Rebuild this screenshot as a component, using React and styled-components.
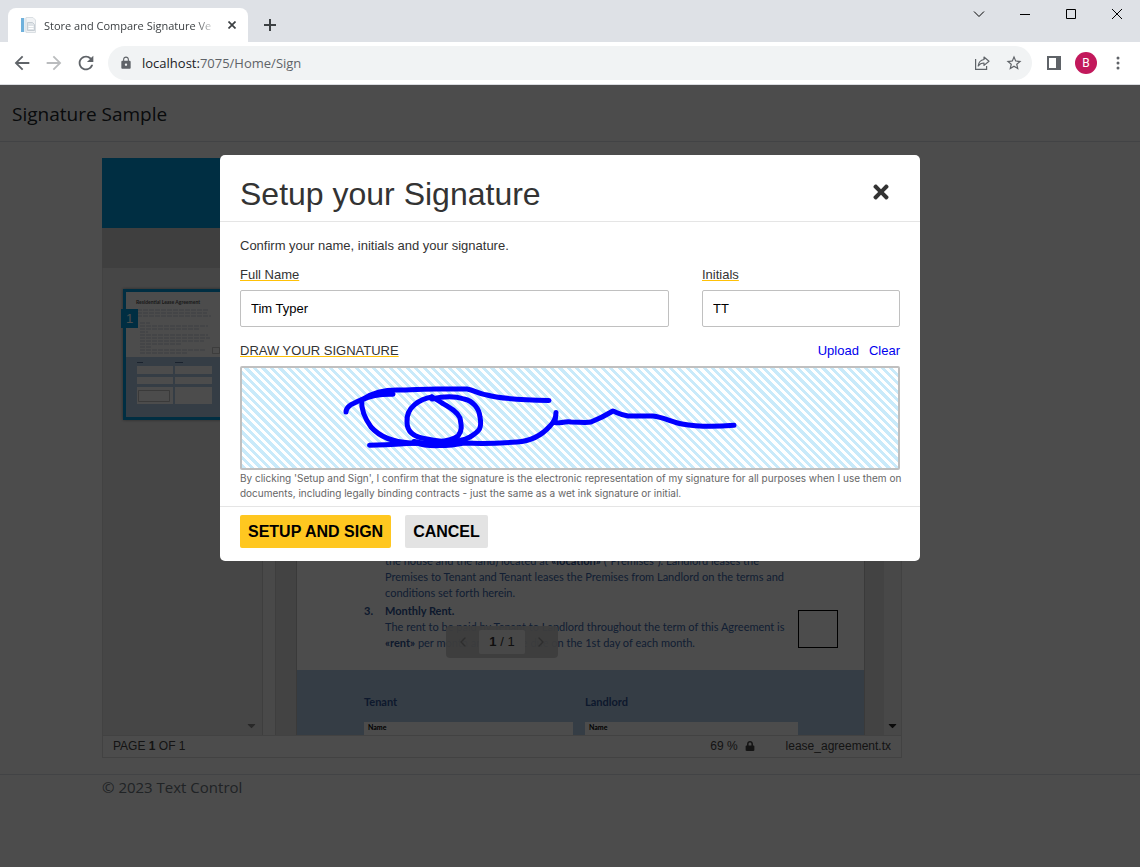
import React, { useState } from 'react'
import styled, { createGlobalStyle } from 'styled-components'
import { MdArrowBack, MdArrowForward, MdRefresh, MdLock, MdStarBorder } from 'react-icons/md'
import { FaTimes, FaCaretDown, FaLock } from 'react-icons/fa'
import { ChevronLeft, ChevronRight } from 'lucide-react'

export default function App() {
    const [fullName, setFullName] = useState('Tim Typer')
    const [initials, setInitials] = useState('TT')

    return (
        <Window>
            <GlobalStyle />
            <TitleBar>
                <Tab>
                    <Favicon />
                    <TabTitle>Store and Compare Signature Ve</TabTitle>
                    <IconButton $size={16} aria-label="Close tab"><CrossIcon /></IconButton>
                </Tab>
                <IconButton $size={28} aria-label="New tab"><PlusIcon /></IconButton>
                <WindowControls>
                    <WindowButton aria-label="Search tabs">
                        <svg width="12" height="12" viewBox="0 0 12 12"><path d="M1 3.5l5 5 5-5" /></svg>
                    </WindowButton>
                    <WindowButton aria-label="Minimize">
                        <svg width="10" height="10" viewBox="0 0 10 10"><path d="M0 5.5h10" /></svg>
                    </WindowButton>
                    <WindowButton aria-label="Maximize">
                        <svg width="10" height="10" viewBox="0 0 10 10"><path d="M.5 .5h9v9h-9z" /></svg>
                    </WindowButton>
                    <WindowButton aria-label="Close">
                        <svg width="10" height="10" viewBox="0 0 10 10"><path d="M0 0l10 10M10 0L0 10" /></svg>
                    </WindowButton>
                </WindowControls>
            </TitleBar>

            <Toolbar>
                <IconButton $size={32} aria-label="Back"><MdArrowBack size={22} /></IconButton>
                <IconButton $size={32} $muted aria-label="Forward"><MdArrowForward size={22} /></IconButton>
                <IconButton $size={32} aria-label="Reload"><MdRefresh size={22} /></IconButton>
                <AddressBar>
                    <MdLock size={14} />
                    <Url><b>localhost:</b>7075/Home/Sign</Url>
                    <IconButton $size={32} aria-label="Share"><ShareIcon /></IconButton>
                    <IconButton $size={32} aria-label="Bookmark"><MdStarBorder size={18} /></IconButton>
                </AddressBar>
                <IconButton $size={32} aria-label="Side panel"><PanelIcon /></IconButton>
                <IconButton $size={32} aria-label="Profile"><Avatar>B</Avatar></IconButton>
                <IconButton $size={32} aria-label="Menu"><DotsIcon /></IconButton>
            </Toolbar>

            <Page>
                <Navbar><Brand href="#">Signature Sample</Brand></Navbar>

                <Container>
                    <Viewer>
                        <ViewerHeader />
                        <ViewerTools />
                        <ViewerBody>
                            <Sidebar>
                                <Thumbnail>
                                    <ThumbnailPage />
                                    <ThumbnailBadge>1</ThumbnailBadge>
                                </Thumbnail>
                                <ScrollDown><FaCaretDown size={13} /></ScrollDown>
                            </Sidebar>
                            <Splitter />
                            <Canvas>
                                <Sheet>
                                    <Terms>
                                        <Clauses>
                                            <p>
                                                the house and the land) located at <b>«location»</b> (“Premises”). Landlord leases the<br />
                                                Premises to Tenant and Tenant leases the Premises from Landlord on the terms and<br />
                                                conditions set forth herein.
                                            </p>
                                            <ClauseTitle><span>3.</span>Monthly Rent.</ClauseTitle>
                                            <p>
                                                The rent to be paid by Tenant to Landlord throughout the term of this Agreement is<br />
                                                <b>«rent»</b> per month and shall be due on the 1st day of each month.
                                            </p>
                                        </Clauses>
                                        <InitialsBox />
                                    </Terms>
                                    <Parties>
                                        <Party>
                                            <h3>Tenant</h3>
                                            <PartyField>Name</PartyField>
                                        </Party>
                                        <Party>
                                            <h3>Landlord</h3>
                                            <PartyField>Name</PartyField>
                                        </Party>
                                    </Parties>
                                </Sheet>
                                <Pager>
                                    <ChevronLeft size={16} />
                                    <PagerValue><b>1</b> / 1</PagerValue>
                                    <ChevronRight size={16} />
                                </Pager>
                            </Canvas>
                            <Scrollbar><FaCaretDown size={13} /></Scrollbar>
                        </ViewerBody>
                        <StatusBar>
                            <PageCount>PAGE <b>1</b> OF 1</PageCount>
                            <span>69 %</span>
                            <FaLock size={10} />
                            <FileName>lease_agreement.tx</FileName>
                        </StatusBar>
                    </Viewer>
                </Container>

                <PageFooter>
                    <FooterText>© 2023 Text Control</FooterText>
                </PageFooter>

                <Backdrop>
                    <Modal role="dialog" aria-labelledby="modal-title">
                        <ModalHeader>
                            <ModalTitle id="modal-title">Setup your Signature</ModalTitle>
                            <CloseButton aria-label="Close dialog"><FaTimes size={22} /></CloseButton>
                        </ModalHeader>
                        <ModalBody>
                            <p>Confirm your name, initials and your signature.</p>
                            <Fields>
                                <Field>
                                    <label htmlFor="fullName"><Underlined>Full Name</Underlined></label>
                                    <TextInput id="fullName" value={fullName} onChange={e => setFullName(e.target.value)} />
                                </Field>
                                <Field>
                                    <label htmlFor="initials"><Underlined>Initials</Underlined></label>
                                    <TextInput id="initials" value={initials} onChange={e => setInitials(e.target.value)} />
                                </Field>
                            </Fields>
                            <PadHeader>
                                <Underlined>DRAW YOUR SIGNATURE</Underlined>
                                <PadLinks>
                                    <a href="#upload">Upload</a>
                                    <a href="#clear">Clear</a>
                                </PadLinks>
                            </PadHeader>
                            <Pad><SignatureDrawing /></Pad>
                            <Legal>
                                By clicking 'Setup and Sign', I confirm that the signature is the electronic representation of my signature for all purposes when I use them on<br />
                                documents, including legally binding contracts - just the same as a wet ink signature or initial.
                            </Legal>
                        </ModalBody>
                        <ModalFooter>
                            <ActionButton $primary>SETUP AND SIGN</ActionButton>
                            <ActionButton>CANCEL</ActionButton>
                        </ModalFooter>
                    </Modal>
                </Backdrop>
            </Page>
        </Window>
    )
}


/** DRAWINGS */

const Favicon = () => (
    <svg width="16" height="16" viewBox="0 0 16 16">
        <path d="M1 1h3v14H1z" fill="#6fb1dc" />
        <path d="M4 1h2v14H4z" fill="#e3edf4" />
        <path d="M6 .5h7l2.5 2.5v12.5H6z" fill="#f1f3f5" stroke="#dadfe3" />
        <path d="M7.5 5.5h5l2 2v6h-7z" fill="#dfe4e8" stroke="#c6cdd3" />
        <path d="M8.5 9.5h5M8.5 11.5h5" stroke="#fff" />
    </svg>
)

const CrossIcon = () => (
    <svg width="8" height="8" viewBox="0 0 8 8" stroke="#3c4043" strokeWidth="1.7"><path d="M.5 .5l7 7M7.5 .5l-7 7" /></svg>
)

const PlusIcon = () => (
    <svg width="12" height="12" viewBox="0 0 12 12" stroke="#3c4043" strokeWidth="2"><path d="M6 0v12M0 6h12" /></svg>
)

const ShareIcon = () => (
    <svg width="16" height="16" viewBox="0 0 16 16" fill="none" stroke="#5f6368" strokeWidth="1.2">
        <path d="M1.6 4v10.4h11V11" />
        <path d="M10 2l5 4.2-5 4.2V8C7.4 8 5.6 8.9 4.2 11 4.6 7.4 6.6 5 10 4.5z" strokeLinejoin="round" />
    </svg>
)

const PanelIcon = () => (
    <svg width="14" height="14" viewBox="0 0 14 14"><path fillRule="evenodd" d="M0 0h14v14H0zM2 2v10h7V2z" fill="#5f6368" /></svg>
)

const DotsIcon = () => (
    <svg width="4" height="14" viewBox="0 0 4 14" fill="#5f6368">
        <circle cx="2" cy="2" r="1.5" /><circle cx="2" cy="7" r="1.5" /><circle cx="2" cy="12" r="1.5" />
    </svg>
)

const textLines = [
    [14, 18, 72], [14, 21, 70], [14, 24, 74], [17, 31, 10], [17, 34, 68], [17, 37, 60],
    [17, 40, 8], [17, 43, 68], [17, 46, 70], [17, 49, 64], [17, 52, 42], [17, 55, 12], [17, 58, 66], [17, 61, 48],
]

const ThumbnailPage = () => (
    <svg width="96" height="125" viewBox="0 0 96 125">
        <path d="M0 0h96v125H0z" fill="#fff" />
        <text x="10" y="12" fontFamily="Lato, sans-serif" fontSize="5" fontWeight="700" fill="#555">Residential Lease Agreement</text>
        {textLines.map(([x, y, w]) => (
            <path key={y} d={`M${x - 3} ${y}h${w}`} stroke="#54709c" strokeWidth="1.6" strokeDasharray="5 1" opacity=".22" />
        ))}
        <path d="M86.5 55.5h7v6h-7z" fill="none" stroke="#999" strokeWidth=".5" />
        <path d="M0 65h96v60H0z" fill="#b3cce6" />
        <path d="M11 70.5h6M49 70.5h8" stroke="#1f3864" opacity=".6" />
        <path d="M11 74h36v8H11zM49 74h37v8H49zM11 85h36v7H11zM49 85h37v7H49zM11 95h36v17H11zM49 95h37v17H49z" fill="#fff" />
        <path d="M12.5 98.5h31v11h-31z" fill="none" stroke="#888" strokeWidth=".5" />
    </svg>
)

const SignatureDrawing = () => (
    <svg width="656" height="100" viewBox="0 0 656 100" fill="none" stroke="#0000ff" strokeWidth="5" strokeLinecap="round" strokeLinejoin="round">
        <path d="M104 44C104 39 107 37 121 31C132 24 142 22 155 22C168 22 182 21 195 21H225C232 22 237 26 245 27C255 30 285 32 307 32.5" />
        <path d="M151 26.3C140 26 128 28 119.7 32C119 42 124 52 129 59C137 68 151 74 168 75C184 76 209 74 216 68C221 62 219 56 218 50C215 43 207 39 200 35C196 32 193 31 190 29" />
        <path d="M190 29C178 31 164 39 165 54C165 67 177 70 185 71C200 74 215 76 228 69C238 63 240 60 238 49C237 40 231 33 222 31C210 27 198 29 190 31" />
        <path d="M127.5 77.3C145 77 158 76 175 75C184 79 208 78 222 75C240 76 262 75 275 74C290 73 300 67 308 58C313 53 314 49 314 44.5L313 54.5C317 56 322 53 329 54C337 54 344 55 349 54C359 50 366 46 371 43C376 45 379 47 386 48H411C421 49 430 54 440 56C456 59 472 59 492 57.3" />
        <path d="M172 73.5C185 77 203 77 214 71" />
    </svg>
)


/** STYLED COMPONENTS */

const GlobalStyle = createGlobalStyle`
    * {
        box-sizing: border-box;
    }
    body {
        margin: 0;
        font-family: 'Open Sans', sans-serif;
    }
    button {
        font-family: inherit;
        border: 0;
        padding: 0;
        cursor: pointer;
    }
    p, h1, h3 {
        margin: 0;
    }
`;

const Window = styled.div`
    display: flex;
    flex-direction: column;
    min-height: 100vh;
`;

const TitleBar = styled.div`
    display: flex;
    align-items: flex-end;
    height: 42px;
    padding-left: 8px;
    background-color: #dee1e6;
`;

const Tab = styled.div`
    display: flex;
    align-items: center;
    gap: 8px;
    width: 240px;
    height: 34px;
    padding: 0 8px 0 12px;
    margin-right: 8px;
    border-radius: 8px 8px 0 0;
    background-color: #fff;
`;

const TabTitle = styled.span`
    flex: 1;
    overflow: hidden;
    white-space: nowrap;
    font-size: 11px;
    color: #3c4043;
    mask-image: linear-gradient(90deg, #000 88%, transparent);
`;

const IconButton = styled.button`
    display: flex;
    align-items: center;
    justify-content: center;
    flex: none;
    width: ${props => props.$size}px;
    height: ${props => props.$size}px;
    background: none;
    color: ${props => props.$muted ? '#babcbe' : '#5f6368'};

    ${TitleBar} > & {
        margin-bottom: 3px;
    }
`;

const WindowControls = styled.div`
    display: flex;
    align-self: flex-start;
    margin-left: auto;
`;

const WindowButton = styled.button`
    display: flex;
    align-items: center;
    justify-content: center;
    width: 46px;
    height: 28px;
    background: none;

    svg {
        fill: none;
        stroke: #000;
    }
`;

const Toolbar = styled.div`
    display: flex;
    align-items: center;
    padding: 4px 6px;
    background-color: #fff;
    border-bottom: 1px solid #dadce0;
`;

const AddressBar = styled.div`
    display: flex;
    align-items: center;
    flex: 1;
    height: 34px;
    margin: 0 6px;
    padding: 0 2px 0 11px;
    border-radius: 17px;
    background-color: #f1f3f4;
    color: #5f6368;
`;

const Url = styled.span`
    flex: 1;
    margin-left: 9px;
    font-size: 13px;

    b {
        font-weight: 400;
        color: #202124;
    }
`;

const Avatar = styled.span`
    width: 22px;
    height: 22px;
    border-radius: 50%;
    background-color: #c2185b;
    color: #fff;
    font: 12px/22px Roboto, sans-serif;
    text-align: center;
`;

const Page = styled.div`
    position: relative;
    flex: 1;
    background-color: #fff;
`;

const Navbar = styled.nav`
    display: flex;
    align-items: center;
    height: 57px;
    padding: 2px 12px 0;
    border-bottom: 1px solid #dee2e6;
`;

const Brand = styled.a`
    font-size: 19px;
    color: #212529;
    text-decoration: none;
`;

const Container = styled.main`
    max-width: 960px;
    margin: 16px auto;
    padding: 0 12px;
`;

const Viewer = styled.div`
    display: flex;
    flex-direction: column;
    max-width: 800px;
    height: 600px;
    font-family: 'Liberation Sans', Arial, sans-serif;
`;

const ViewerHeader = styled.div`
    height: 70px;
    background-color: #0099dd;
`;

const ViewerTools = styled.div`
    height: 40px;
    background-color: #d2d2d2;
`;

const ViewerBody = styled.div`
    display: flex;
    flex: 1;
    min-height: 0;
    border: solid #dcdcdc;
    border-width: 0 1px;
`;

const Sidebar = styled.div`
    position: relative;
    width: 160px;
    padding: 21px 20px;
    background-color: #ebebeb;
    border-right: 1px solid #d0d0d0;
`;

const Thumbnail = styled.div`
    position: relative;
    width: 102px;
    border: 3px solid #0099dd;
    box-shadow: 0 0 3px rgba(0, 0, 0, 0.4);

    svg {
        display: block;
    }
`;

const ThumbnailBadge = styled.span`
    position: absolute;
    top: 17px;
    left: -5px;
    width: 17px;
    background-color: #0099dd;
    color: #fff;
    font-size: 13px;
    line-height: 19px;
    text-align: center;
`;

const ScrollDown = styled.span`
    position: absolute;
    right: 4px;
    bottom: 3px;
    color: #888;
    line-height: 0;
`;

const Splitter = styled.div`
    width: 13px;
    background-color: #f4f4f4;
    border-right: 1px solid #d0d0d0;
`;

const Canvas = styled.div`
    position: relative;
    flex: 1;
    padding: 0 19px 0 20px;
    background-color: #e0e0e0;
`;

const Sheet = styled.div`
    display: flex;
    flex-direction: column;
    height: 100%;
    background-color: #fff;
    border: solid #c4c4c4;
    border-width: 0 1px;
    font-family: Lato, sans-serif;
    color: #3a66ab;
`;

const Terms = styled.div`
    display: flex;
    flex: 1;
    align-items: flex-end;
    justify-content: space-between;
    padding: 0 26px 19px 88px;
`;

const Clauses = styled.div`
    font-size: 11px;
    line-height: 16px;
    white-space: nowrap;

    b {
        color: #2f5496;
    }
`;

const ClauseTitle = styled.p`
    margin-top: 2px;
    margin-left: -21px;
    font-weight: 700;
    color: #2f5496;

    span {
        display: inline-block;
        width: 21px;
    }
`;

const InitialsBox = styled.div`
    width: 40px;
    height: 38px;
    margin-bottom: 3px;
    border: 1px solid #000;
`;

const Parties = styled.div`
    display: grid;
    grid-template-columns: 209px 213px;
    column-gap: 12px;
    height: 65px;
    padding: 24px 0 0 67px;
    background-color: #b3cce6;
`;

const Party = styled.div`
    h3 {
        margin-bottom: 12px;
        font-size: 11px;
        line-height: 16px;
        color: #2f5496;
    }
`;

const PartyField = styled.div`
    padding-left: 4px;
    background-color: #fff;
    color: #000;
    font-size: 7px;
    font-weight: 700;
    line-height: 10px;
    height: 13px;
`;

const Pager = styled.div`
    position: absolute;
    bottom: 77px;
    left: 170px;
    display: flex;
    align-items: center;
    justify-content: space-between;
    width: 112px;
    height: 32px;
    padding: 0 9px;
    border-radius: 4px;
    background-color: rgba(205, 205, 205, 0.92);
    color: #999;
`;

const PagerValue = styled.span`
    width: 46px;
    border-radius: 2px;
    background-color: #f2f2f2;
    color: #333;
    font-size: 13px;
    line-height: 24px;
    text-align: center;
`;

const Scrollbar = styled.div`
    display: flex;
    align-items: flex-end;
    justify-content: center;
    width: 17px;
    padding-bottom: 3px;
    background-color: #f1f1f1;
    color: #222;
`;

const StatusBar = styled.div`
    display: flex;
    align-items: center;
    height: 23px;
    padding: 0 10px 2px;
    border: 1px solid #dcdcdc;
    font-size: 12px;
    color: #444;
`;

const PageCount = styled.span`
    flex: 1;

    & ~ svg {
        margin: 0 31px 0 7px;
    }
`;

const FileName = styled.span`
    white-space: nowrap;
`;

const PageFooter = styled.footer`
    border-top: 1px solid #dee2e6;
`;

const FooterText = styled.div`
    max-width: 960px;
    margin: 0 auto;
    padding: 0 12px;
    font-size: 15px;
    line-height: 24px;
    color: #6c757d;
`;

const Backdrop = styled.div`
    position: absolute;
    inset: 0;
    padding-top: 70px;
    background-color: rgba(0, 0, 0, 0.7);
`;

const Modal = styled.div`
    max-width: 700px;
    margin: 0 auto;
    border-radius: 5px;
    background-color: #fff;
    color: #333;
    font: 13px/18px 'Liberation Sans', Arial, sans-serif;
`;

const ModalHeader = styled.div`
    display: flex;
    align-items: center;
    justify-content: space-between;
    height: 67px;
    padding: 12px 28px 0 20px;
    border-bottom: 1px solid #e5e5e5;
`;

const ModalTitle = styled.h1`
    font-size: 32px;
    font-weight: 400;
    line-height: 40px;
`;

const CloseButton = styled.button`
    background: none;
    color: #333;
    line-height: 0;
    margin-bottom: 4px;
`;

const ModalBody = styled.div`
    padding: 15px 20px 5px;
`;

const Fields = styled.div`
    display: grid;
    grid-template-columns: 65% 30%;
    justify-content: space-between;
    margin: 11px 0 15px;
`;

const Field = styled.div`
    display: flex;
    flex-direction: column;
    gap: 6px;
`;

const Underlined = styled.span`
    text-decoration-line: underline;
    text-decoration-color: #ffc107;
    text-decoration-thickness: 1px;
    text-decoration-skip-ink: none;
    text-underline-offset: 1px;
`;

const TextInput = styled.input`
    width: 100%;
    height: 37px;
    padding: 0 10px;
    border: 1px solid #c0c0c0;
    border-radius: 2px;
    font: inherit;
    color: #000;
`;

const PadHeader = styled.div`
    display: flex;
    justify-content: space-between;
`;

const PadLinks = styled.div`
    display: flex;
    gap: 10px;

    a {
        color: #0000ee;
        text-decoration: none;
    }
`;

const Pad = styled.div`
    height: 104px;
    margin-top: 6px;
    border: 2px solid #c0c0c0;
    border-radius: 2px;
    overflow: hidden;
    background: repeating-linear-gradient(45deg, #c9eafa 0 3px, #fff 3px 6px);
`;

const Legal = styled.p`
    margin-top: 1px;
    font-family: Inter, sans-serif;
    font-size: 10px;
    line-height: 15px;
    white-space: nowrap;
    color: #666;
`;

const ModalFooter = styled.div`
    display: flex;
    gap: 14px;
    padding: 8px 20px 13px;
    border-top: 1px solid #e5e5e5;
`;

const ActionButton = styled.button`
    height: 33px;
    padding: 0 8px;
    border-radius: 2px;
    background-color: ${props => props.$primary ? '#ffc720' : '#e3e3e3'};
    color: #000;
    font-size: 16px;
    font-weight: 700;
`;
